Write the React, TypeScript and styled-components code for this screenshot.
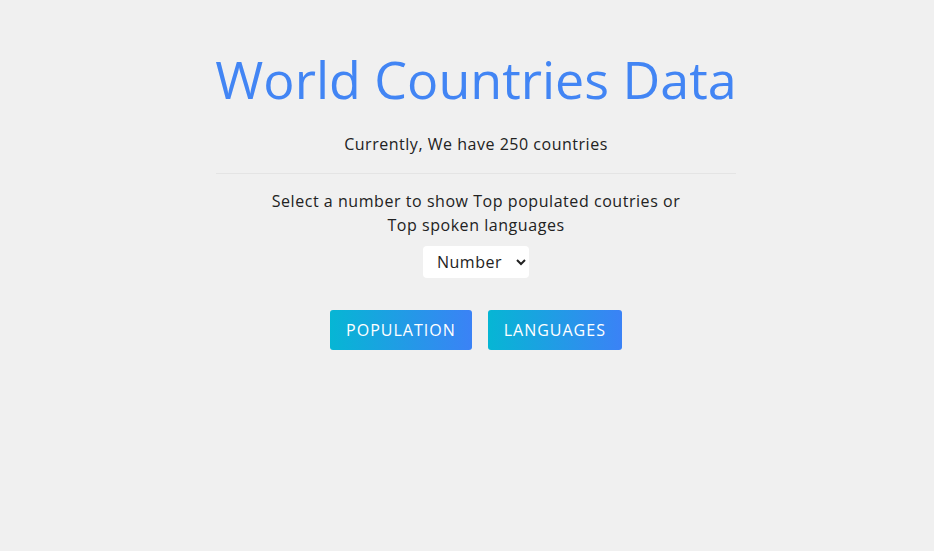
import React from "react";
import styled, { createGlobalStyle } from "styled-components";

const Global = createGlobalStyle`
  html, body { margin: 0; padding: 0; background: #f0f0f0; }
  body { font-family: "Open Sans", "Liberation Sans", sans-serif; color: #222; }
`;

const Page = styled.div`
  display: flex;
  justify-content: center;
  padding-left: 18px;
  min-height: 551px;
  box-sizing: border-box;
`;

const Container = styled.main`
  width: 520px;
  display: flex;
  flex-direction: column;
  align-items: center;
`;

const Title = styled.h1`
  margin: 48px 0 0;
  font-size: 52px;
  line-height: 62px;
  font-weight: 400;
  color: #4285f4;
  white-space: nowrap;
`;

const Subtitle = styled.p`
  margin: 22px 0 0;
  font-size: 16px;
  line-height: 24px;
  letter-spacing: 0.52px;
  color: #222;
`;

const Divider = styled.hr`
  align-self: stretch;
  margin: 17px 0 0;
  border: none;
  border-top: 1px solid #e4e4e4;
`;

const Prompt = styled.p`
  margin: 15px 0 0;
  font-size: 16px;
  line-height: 24px;
  letter-spacing: 0.55px;
  text-align: center;
  color: #222;
`;

const Select = styled.select`
  margin-top: 9px;
  width: 106px;
  height: 32px;
  border: none;
  border-radius: 4px;
  background: #fff;
  font-family: inherit;
  font-size: 16px;
  letter-spacing: 0.5px;
  color: #222;
  padding: 0 8px 0 10px;
  outline: none;
`;

const Actions = styled.div`
  display: flex;
  gap: 16px;
  margin-top: 32px;
`;

const Button = styled.button`
  height: 40px;
  padding: 0 16px;
  border: none;
  border-radius: 3px;
  background: linear-gradient(to right, #06b6d4, #3b82f6);
  color: #fff;
  font-family: inherit;
  font-size: 16px;
  letter-spacing: 1px;
  text-transform: uppercase;
  cursor: pointer;
`;

export default function App() {
  return (
    <>
      <Global />
      <Page>
        <Container>
          <Title>World Countries Data</Title>
          <Subtitle>Currently, We have 250 countries</Subtitle>
          <Divider />
          <Prompt>
            Select a number to show Top populated coutries or
            <br />
            Top spoken languages
          </Prompt>
          <Select defaultValue="">
            <option value="">Number</option>
            <option value="5">5</option>
            <option value="10">10</option>
            <option value="20">20</option>
          </Select>
          <Actions>
            <Button>Population</Button>
            <Button>Languages</Button>
          </Actions>
        </Container>
      </Page>
    </>
  );
}
